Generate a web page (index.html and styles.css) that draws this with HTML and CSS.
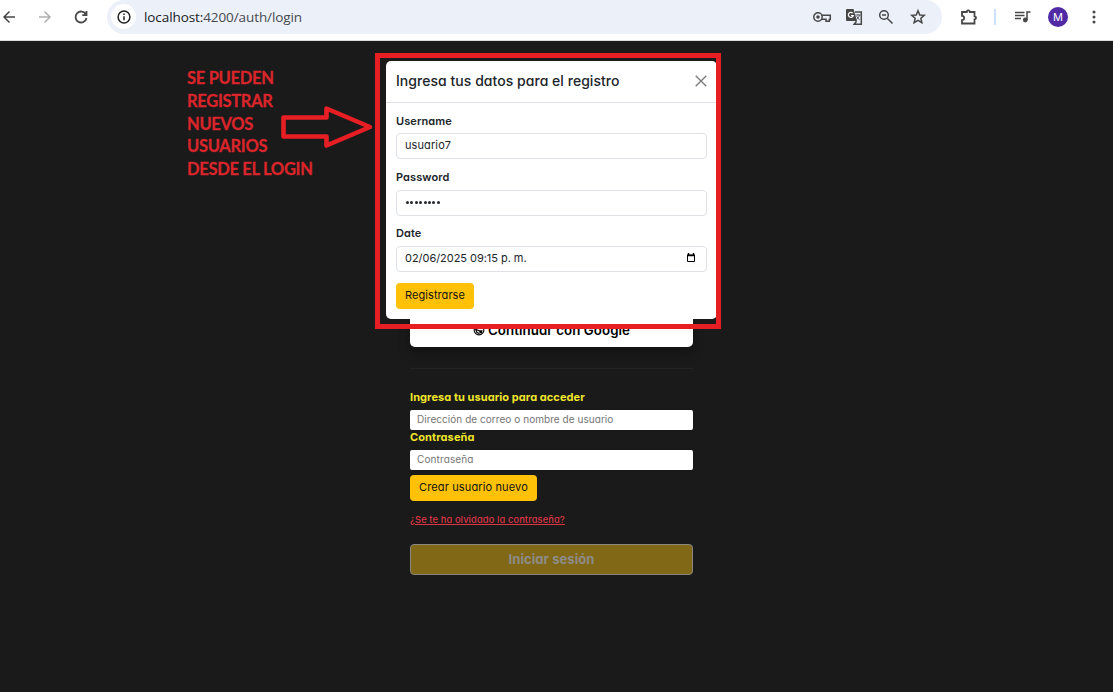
FILE: index.html
```html
<!DOCTYPE html>
<html lang="es">
<head>
<meta charset="utf-8">
<title>Login</title>
<link rel="stylesheet" href="styles.css">
</head>
<body>
<header class="toolbar">
  <svg class="nav back" viewBox="0 0 16 16"><path d="M15 8H4M9.500 2.500 4 8l5.500 5.500"/></svg>
  <svg class="nav forward" viewBox="0 0 16 16"><path d="M3 8h11M8.500 2.500 14 8l-5.500 5.500"/></svg>
  <svg class="nav reload" viewBox="0 0 16 16"><path d="M13 5.500A5.500 5.500 0 1 0 13.500 9M13.500 2v4.200H9.300"/></svg>
  <div class="address">
    <span class="info"><svg viewBox="0 0 16 16"><circle cx="8" cy="8" r="5.900"/><path d="M8 7.300v3.900M8 4.500v1.500"/></svg></span>
    <span class="url"><span class="host">localhost:</span>4200/auth/login</span>
    <div class="tools">
      <svg class="key" viewBox="0 0 20 16"><circle cx="6" cy="8" r="4.200"/><circle class="fill" cx="6" cy="8" r="1.800"/><path d="M9.800 6.200h8.500v4.300h-1v1.700h-3.300v-2H9.800"/></svg>
      <svg class="translate" viewBox="0 0 18 18"><path class="fill" d="M2 1h6.500l3.500 12H2a1 1 0 0 1-1-1V2a1 1 0 0 1 1-1z"/><path d="M10 4h6.300v12.300H9.200l2.300-3"/><path class="light" d="M7.800 5.200A2.500 2.500 0 1 0 8.300 7.500H6"/><path class="thin" d="M10.500 7h5M13 6v1M14.500 7c-.5 2-1.700 3.500-3 4.500M11.700 8.200c.7 1.700 1.800 2.700 3 3.700"/></svg>
      <svg class="lens" viewBox="0 0 16 16"><circle cx="6" cy="6" r="4.300"/><path d="M9.200 9.200 14.500 14.500M4 6h4"/></svg>
      <svg class="star" viewBox="0 0 16 16"><path d="m8 1.800 1.750 4.150 4.500.38-3.400 2.950 1.020 4.400L8 11.350l-3.870 2.330 1.020-4.400-3.400-2.950 4.500-.38z"/></svg>
    </div>
  </div>
  <svg class="puzzle" viewBox="0 0 18 18"><path d="M2 4h4.700a1.600 1.600 0 0 1 3.200 0h4.600v4.300a1.500 1.500 0 0 1 0 3v4.200H2v-3.400a2.100 2.100 0 0 0 0-4.300z"/></svg>
  <span class="divider"></span>
  <svg class="queue" viewBox="0 0 18 16"><path d="M1 3.500h9.500M1 6.500h9.500M1 9.500h6M13 11V3h3.500"/><circle class="fill" cx="11.300" cy="11" r="2.400"/></svg>
  <span class="avatar">M</span>
  <svg class="menu" viewBox="0 0 4 16"><circle cx="2" cy="3" r="1.500"/><circle cx="2" cy="8" r="1.500"/><circle cx="2" cy="13" r="1.500"/></svg>
</header>
<main class="page">
  <section class="login">
    <button class="google"><svg viewBox="0 0 16 16"><circle cx="8" cy="8" r="6.500"/><path d="M11 5.500A4 4 0 1 0 12 9H8M2.500 6.500 8 9l4 3"/></svg>Continuar con Google</button>
    <hr class="rule">
    <label class="caption user">Ingresa tu usuario para acceder</label>
    <div class="entry">Dirección de correo o nombre de usuario</div>
    <label class="caption pass">Contraseña</label>
    <div class="entry pass-entry">Contraseña</div>
    <button class="button create">Crear usuario nuevo</button>
    <a class="forgot">¿Se te ha olvidado la contraseña?</a>
    <button class="submit">Iniciar sesión</button>
  </section>
  <section class="modal">
    <header class="modal-head"><h1>Ingresa tus datos para el registro</h1><svg class="close" viewBox="0 0 12 12"><path d="m.7.700 10.600 10.600M11.300.700.700 11.300"/></svg></header>
    <div class="modal-body">
      <label class="label">Username</label>
      <div class="field username">usuario7</div>
      <label class="label password">Password</label>
      <div class="field dots"><i></i><i></i><i></i><i></i><i></i><i></i><i></i><i></i></div>
      <label class="label date-label">Date</label>
      <div class="field date">02/06/2025 09:15 p. m.<svg class="calendar" viewBox="0 0 10 10"><path d="M1.500 2h7v6.500h-7z"/><path class="bar" d="M1 2.500h8M2.500 0v2M7.500 0v2"/></svg></div>
      <button class="button register">Registrarse</button>
    </div>
  </section>
  <div class="highlight"></div>
  <p class="note">SE PUEDEN<br>REGISTRAR<br>NUEVOS<br>USUARIOS<br>DESDE EL LOGIN</p>
  <svg class="arrow" viewBox="0 0 94 44"><path d="M3.500 12.500h43v-9L90 22 46.500 40.500v-9h-43z"/></svg>
</main>
</body>
</html>
```
FILE: styles.css
```css
* { box-sizing: border-box; }
body { margin: 0; width: 1113px; height: 692px; overflow: hidden; background: #1a1a1a; font-family: Inter, "Open Sans", sans-serif; font-feature-settings: "cv11"; white-space: nowrap; }
button { font: inherit; font-feature-settings: inherit; border: 0; padding: 0; }
svg { display: block; fill: none; stroke: #474747; stroke-width: 1.5; flex: none; overflow: visible; }
svg .fill { fill: #474747; stroke: none; }
.toolbar { height: 41px; padding-bottom: 7px; background: #fff; border-bottom: 1px solid #dcdcdc; display: flex; align-items: center; }
.nav { width: 16px; height: 16px; }
.forward { margin-left: 20px; stroke: #b0b0b0; }
.reload { margin-left: 21px; stroke-width: 1.8; }
.address { width: 835px; height: 34px; margin-left: 18px; padding: 0 16px 0 4px; border-radius: 17px; background: #ebf0f9; display: flex; align-items: center; }
.info { width: 25px; height: 25px; border-radius: 50%; background: #fff; display: grid; place-items: center; }
.info svg { width: 16px; height: 16px; stroke: #222; }
.url { margin-left: 8px; font: 13.5px "Open Sans", sans-serif; letter-spacing: -.09px; color: #474a4d; }
.host { color: #202124; }
.tools { margin-left: auto; display: flex; align-items: center; gap: 13px; }
.key { width: 20px; height: 16px; }
.translate { width: 18px; height: 18px; }
.translate .light { stroke: #fff; stroke-width: 1.2; }
.translate .thin { stroke-width: .9; }
.lens, .star { width: 16px; height: 16px; }
.lens { margin-left: 2px; }
.star { margin-left: 3px; }
.puzzle { width: 18px; height: 18px; margin-left: 18px; stroke-width: 1.8; }
.divider { width: 2px; height: 16px; margin-left: 16px; background: #cfe0fb; }
.queue { width: 18px; height: 16px; margin-left: 18px; }
.avatar { width: 20px; height: 20px; margin-left: 16px; border-radius: 50%; background: #5029a5; color: #fff; font-size: 11px; display: grid; place-items: center; }
.menu { width: 4px; height: 16px; margin-left: 24px; fill: #474747; stroke: none; }
.page { display: flex; justify-content: center; padding-right: 10px; height: 651px; }
.login { width: 283px; padding-top: 273px; display: flex; flex-direction: column; align-items: stretch; }
.google { height: 33px; padding-bottom: 2px; background: #fff; border-radius: 0 0 5px 5px; box-shadow: 0 6px 12px rgba(0,0,0,.3); display: flex; align-items: center; justify-content: center; gap: 3px; font-size: 13.300px; letter-spacing: .08px; font-weight: 600; color: #000; }
.google svg { width: 12px; height: 12px; stroke: #000; }
.rule { width: 100%; height: 1px; margin: 21px 0 20px; border: 0; background: #242424; }
.caption { height: 20px; line-height: 16px; font-size: 11px; font-weight: 700; color: #f1e72b; }
.user { height: 21px; letter-spacing: .07px; }
.pass { line-height: 15px; letter-spacing: .12px; }
.entry { height: 20px; padding-left: 7px; border-radius: 2px; background: #fff; font-size: 10px; line-height: 19px; letter-spacing: .05px; color: #757575; }
.pass-entry { letter-spacing: .12px; }
.button { height: 26px; padding-bottom: 2px; border-radius: 4px; background: #ffc107; color: #111; font-size: 11px; }
.create { width: 127px; margin-top: 5px; letter-spacing: .13px; }
.forgot { height: 14px; margin-top: 12px; font-size: 9.300px; letter-spacing: .12px; line-height: 14px; font-weight: 500; color: #dc3545; text-decoration: underline; }
.submit { height: 31px; margin-top: 17px; padding-bottom: 2px; border: 1px solid #8b8780; border-radius: 4px; background: #816817; color: #8d8c88; font-size: 13px; font-weight: 700; letter-spacing: .08px; }
.modal { position: absolute; left: 386px; top: 61px; width: 331px; height: 258px; border-radius: 5px; background: #fff; color: #212529; }
.modal-head { height: 42px; padding: 0 10px 2px 10px; border-bottom: 1px solid #dee2e6; display: flex; align-items: center; justify-content: space-between; }
.modal-head h1 { margin: 0; font-size: 14px; font-weight: 500; letter-spacing: .04px; }
.close { width: 12px; height: 12px; stroke: #777; stroke-width: 1.3; }
.modal-body { padding: 10px 10px 0; display: flex; flex-direction: column; }
.label { height: 20px; line-height: 17px; font-size: 11px; font-weight: 600; letter-spacing: .08px; }
.password { height: 21px; }
.date-label { line-height: 15px; }
.field { height: 26px; margin-bottom: 10px; padding: 0 10px 2px 8px; border: 1px solid #dee2e6; border-radius: 4px; display: flex; align-items: center; font-size: 11px; }
.username { letter-spacing: .1px; }
.date { letter-spacing: -.04px; margin-bottom: 11px; }
.dots { gap: 1.400px; padding-left: 9px; padding-bottom: 1px; }
.dots i { width: 3px; height: 3px; border-radius: 50%; background: #212529; }
.calendar { width: 10px; height: 10px; margin-left: auto; stroke: #000; stroke-width: 1; }
.calendar .bar { stroke-width: 1.500; }
.register { width: 78px; letter-spacing: .07px; }
.highlight { position: absolute; left: 375px; top: 53px; width: 346px; height: 276px; border: 5px solid #e81e25; }
.note { position: absolute; left: 187px; top: 67px; margin: 0; font: 700 16.500px/22.800px Lato, sans-serif; letter-spacing: -.3px; color: #d9252b; -webkit-text-stroke: .3px #d9252b; }
.arrow { position: absolute; left: 280px; top: 105px; width: 94px; height: 44px; stroke: #e81e25; stroke-width: 4.600; stroke-linejoin: round; }
```
